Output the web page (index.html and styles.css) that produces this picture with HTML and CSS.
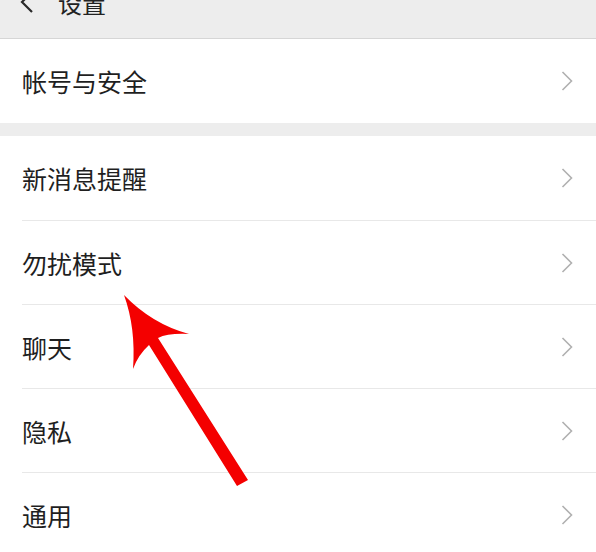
FILE: index.html
```html
<!DOCTYPE html>
<html lang="zh">
<head>
<meta charset="utf-8">
<title>设置</title>
<link rel="stylesheet" href="styles.css">
</head>
<body>
<div class="page">
  <header class="topbar">
    <span class="back">
      <svg width="14" height="24" viewBox="0 0 14 24"><path d="M12 1 L2 11 L12 21" fill="none" stroke="#2a2a2a" stroke-width="2.2"/></svg>
    </span>
    <span class="title">设置</span>
  </header>
  <section class="group">
    <div class="row"><span class="label">帐号与安全</span><svg class="chev" width="12" height="20" viewBox="0 0 12 20"><path d="M1.5 1 L10.5 10 L1.5 19" fill="none" stroke="#b0b0b0" stroke-width="1.6"/></svg></div>
  </section>
  <section class="group">
    <div class="row"><span class="label">新消息提醒</span><svg class="chev" width="12" height="20" viewBox="0 0 12 20"><path d="M1.5 1 L10.5 10 L1.5 19" fill="none" stroke="#b0b0b0" stroke-width="1.6"/></svg></div>
    <div class="row"><span class="label">勿扰模式</span><svg class="chev" width="12" height="20" viewBox="0 0 12 20"><path d="M1.5 1 L10.5 10 L1.5 19" fill="none" stroke="#b0b0b0" stroke-width="1.6"/></svg></div>
    <div class="row"><span class="label">聊天</span><svg class="chev" width="12" height="20" viewBox="0 0 12 20"><path d="M1.5 1 L10.5 10 L1.5 19" fill="none" stroke="#b0b0b0" stroke-width="1.6"/></svg></div>
    <div class="row"><span class="label">隐私</span><svg class="chev" width="12" height="20" viewBox="0 0 12 20"><path d="M1.5 1 L10.5 10 L1.5 19" fill="none" stroke="#b0b0b0" stroke-width="1.6"/></svg></div>
    <div class="row"><span class="label">通用</span><svg class="chev" width="12" height="20" viewBox="0 0 12 20"><path d="M1.5 1 L10.5 10 L1.5 19" fill="none" stroke="#b0b0b0" stroke-width="1.6"/></svg></div>
  </section>
  <svg class="pointer" width="596" height="552" viewBox="0 0 596 552">
    <path d="M124,295 Q152,324 189,334 Q168,333 158,338 L248,480 L237,486 L149,345 Q138,355 133,369 Q136,328 124,295 Z" fill="#f40000"/>
  </svg>
</div>
</body>
</html>
```
FILE: styles.css
```css
html, body {
  margin: 0;
  padding: 0;
  background: #ededed;
}
body {
  font-family: "Noto Sans CJK SC", "Noto Sans", sans-serif;
  color: #1f1f1f;
  overflow: hidden;
}
.page {
  position: relative;
  width: 596px;
  height: 552px;
  overflow: hidden;
}
.topbar {
  height: 38px;
  background: #ededed;
  border-bottom: 1px solid #d6d6d6;
  display: flex;
  align-items: flex-start;
  box-sizing: content-box;
}
.back {
  margin-left: 20px;
  margin-top: -9px;
  display: flex;
}
.title {
  margin-left: 24px;
  margin-top: -10px;
  font-size: 24px;
  line-height: 26px;
  color: #222;
}
.group {
  background: #fff;
  margin-bottom: 13px;
}
.row {
  height: 84px;
  margin-left: 22px;
  padding-right: 23px;
  display: flex;
  align-items: center;
  justify-content: space-between;
  border-top: 1px solid #e8e8e8;
  box-sizing: border-box;
}
.row:first-child {
  border-top: none;
}
.label {
  font-size: 25px;
  line-height: 30px;
  color: #1f1f1f;
}
.chev {
  display: block;
}
.pointer {
  position: absolute;
  left: 0;
  top: 0;
  pointer-events: none;
}
```
